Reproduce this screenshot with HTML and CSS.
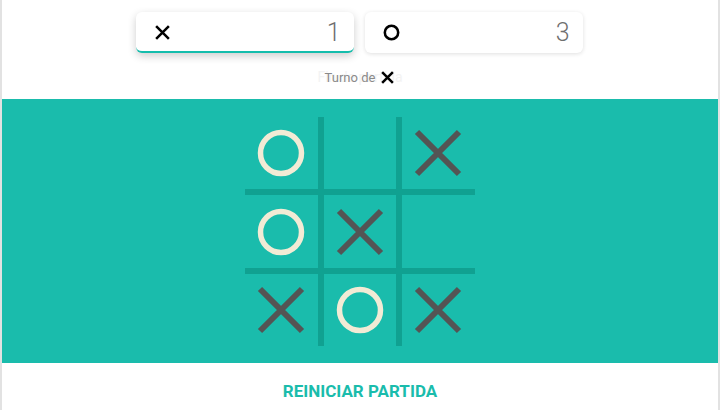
FILE: index.html
```html
<!DOCTYPE html>
<html lang="es">
<head>
<meta charset="utf-8">
<title>Tres en raya</title>
<link rel="stylesheet" href="styles.css">
</head>
<body>
<div class="app">
  <header class="header">
    <div class="scores">
      <div class="score score--active">
        <svg class="mark" viewBox="0 0 16 16"><path d="M2 2 L14 14 M14 2 L2 14" stroke="#000" stroke-width="2.4" fill="none"/></svg>
        <span class="count">1</span>
      </div>
      <div class="score">
        <svg class="mark" viewBox="0 0 16 16"><circle cx="8" cy="8" r="6.3" stroke="#000" stroke-width="2.4" fill="none"/></svg>
        <span class="count">3</span>
      </div>
    </div>
    <div class="status">
      <span class="ghost">Fin de partida</span>
      <span class="turn">Turno de <svg class="turn-mark" viewBox="0 0 14 14"><path d="M2 2 L12 12 M12 2 L2 12" stroke="#000" stroke-width="2.3" fill="none"/></svg></span>
    </div>
  </header>
  <main class="board-area">
    <div class="board">
      <div class="cell"><svg viewBox="0 0 50 50"><circle cx="25" cy="25" r="20.5" class="o"/></svg></div>
      <div class="cell"></div>
      <div class="cell"><svg viewBox="0 0 50 50"><path d="M4 4 L46 46 M46 4 L4 46" class="x"/></svg></div>
      <div class="cell"><svg viewBox="0 0 50 50"><circle cx="25" cy="25" r="20.5" class="o"/></svg></div>
      <div class="cell"><svg viewBox="0 0 50 50"><path d="M4 4 L46 46 M46 4 L4 46" class="x"/></svg></div>
      <div class="cell"></div>
      <div class="cell"><svg viewBox="0 0 50 50"><path d="M4 4 L46 46 M46 4 L4 46" class="x"/></svg></div>
      <div class="cell"><svg viewBox="0 0 50 50"><circle cx="25" cy="25" r="20.5" class="o"/></svg></div>
      <div class="cell"><svg viewBox="0 0 50 50"><path d="M4 4 L46 46 M46 4 L4 46" class="x"/></svg></div>
    </div>
  </main>
  <footer class="footer">
    <button class="restart">REINICIAR PARTIDA</button>
  </footer>
</div>
</body>
</html>
```
FILE: styles.css
```css
* { box-sizing: border-box; }
html, body { margin: 0; padding: 0; background: #fff; }
body { font-family: Roboto, "Liberation Sans", Arial, sans-serif; }

.app {
  width: 720px;
  height: 410px;
  border-left: 2px solid #e2e2e2;
  border-right: 2px solid #e2e2e2;
  display: flex;
  flex-direction: column;
  overflow: hidden;
}

.header {
  height: 99px;
  padding-top: 12px;
  display: flex;
  flex-direction: column;
  align-items: center;
}

.scores {
  display: flex;
  gap: 11px;
  margin-left: -2px;
}

.score {
  width: 218px;
  height: 41px;
  background: #fff;
  border-radius: 6px;
  box-shadow: 0 1px 4px rgba(0,0,0,0.13);
  display: flex;
  align-items: center;
  justify-content: space-between;
  padding: 0 13px 0 18px;
}

.score--active {
  border-bottom: 2px solid #14bdac;
  box-shadow: 0 3px 8px rgba(0,0,0,0.2);
  padding-top: 2px;
}

.mark { width: 17px; height: 17px; display: block; }

.count {
  font-size: 25px;
  font-weight: 300;
  color: #6f6f6f;
  line-height: 1;
}

.status {
  position: relative;
  margin-top: 14px;
  height: 20px;
  display: flex;
  align-items: center;
  justify-content: center;
}

.ghost {
  position: absolute;
  left: 50%;
  top: 50%;
  transform: translate(-50%, -50%);
  font-size: 14px;
  color: #f3f3f3;
  white-space: nowrap;
}

.turn {
  position: relative;
  font-size: 13px;
  color: #8a8a8a;
  display: flex;
  align-items: center;
  gap: 5px;
}

.turn-mark { width: 15px; height: 15px; display: block; }

.board-area {
  height: 264px;
  background: #1abcac;
  display: flex;
  justify-content: center;
  padding-top: 18px;
}

.board {
  width: 230px;
  height: 229px;
  display: grid;
  grid-template-columns: 73px 72px 73px;
  grid-template-rows: 72px 73px 72px;
  gap: 6px;
  background: #10a191;
  margin-left: -1px;
}

.cell {
  background: #1abcac;
  display: flex;
  align-items: center;
  justify-content: center;
}

.cell svg { width: 50px; height: 50px; display: block; }

.o { fill: none; stroke: #f2ebd5; stroke-width: 5.5; }
.x { fill: none; stroke: #545454; stroke-width: 6; }

.footer {
  flex: 1;
  display: flex;
  align-items: center;
  justify-content: center;
}

.restart {
  border: 0;
  background: transparent;
  font-family: Roboto, "Liberation Sans", Arial, sans-serif;
  font-weight: 700;
  font-size: 17px;
  color: #1abcac;
  padding: 0;
  margin-top: 8px;
}
```
